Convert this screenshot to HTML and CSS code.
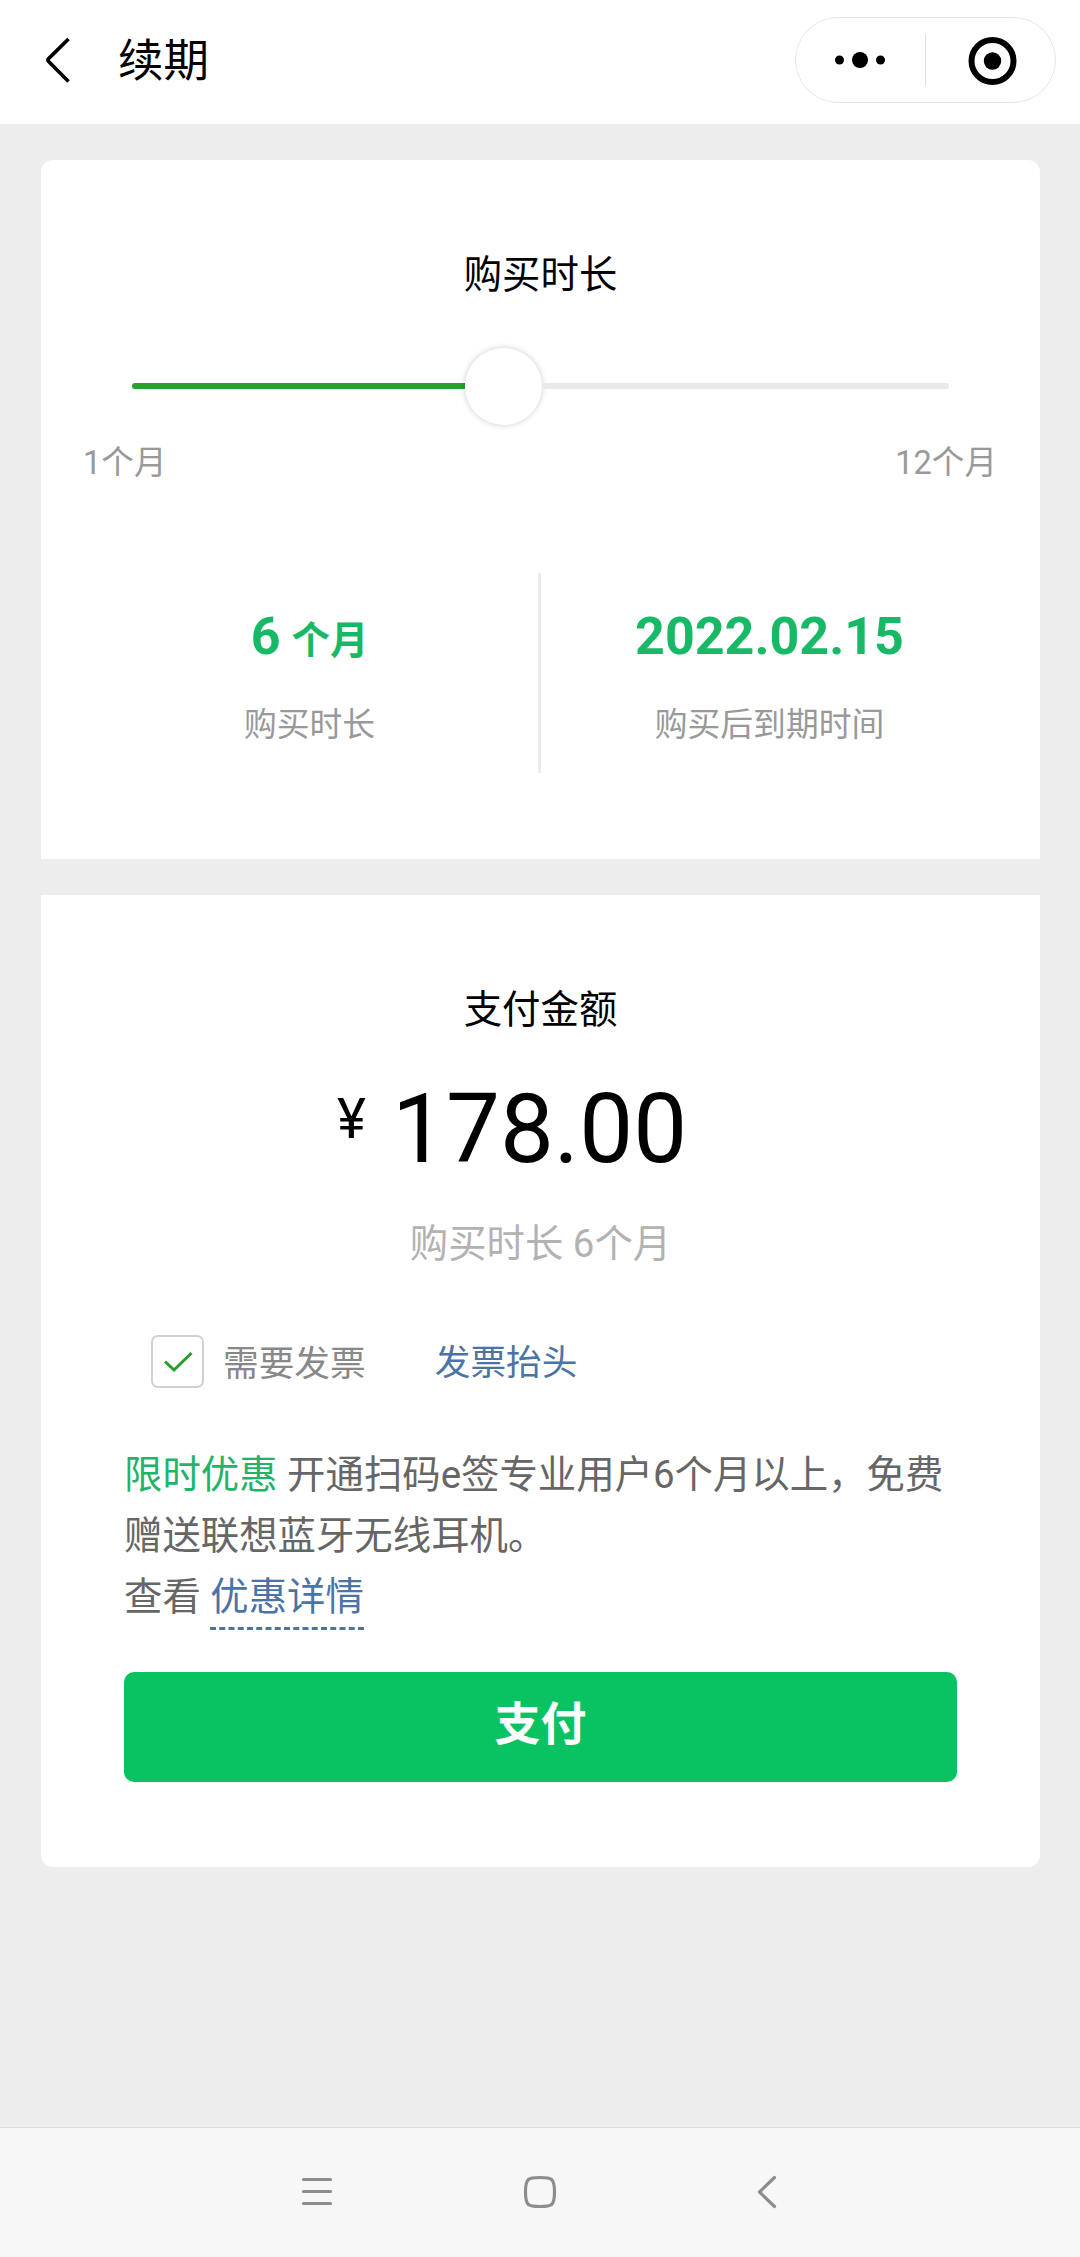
FILE: index.html
```html
<!DOCTYPE html>
<html lang="zh-CN">
<head>
<meta charset="utf-8">
<title>续期</title>
<link rel="stylesheet" href="styles.css">
</head>
<body>
<header class="topbar">
  <svg class="back" width="28" height="48" viewBox="0 0 28 48" fill="none" stroke="#000" stroke-width="3.6" stroke-linejoin="round"><path d="M24.5 3 4.6 22.6Q3.2 24 4.6 25.4L24.5 45.500"/></svg>
  <h1 class="page-title">续期</h1>
  <div class="capsule">
    <svg class="more" width="129" height="84" viewBox="0 0 129 84"><circle cx="43.500" cy="42" r="4.500"/><circle cx="64" cy="42" r="8"/><circle cx="84.500" cy="42" r="4.500"/></svg>
    <span class="capsule-line"></span>
    <svg class="close" width="129" height="84" viewBox="0 0 129 84"><circle cx="66.500" cy="43" r="21" fill="none" stroke="#000" stroke-width="6"/><circle cx="66.500" cy="43" r="8.700"/></svg>
  </div>
</header>
<main class="content">
  <section class="card card-term">
    <h2 class="card-title">购买时长</h2>
    <div class="slider"><span class="fill"></span><span class="thumb"></span><span class="rest"></span></div>
    <div class="range"><span>1个月</span><span>12个月</span></div>
    <div class="stats">
      <div class="stat"><div class="value">6 <span class="unit">个月</span></div><div class="label">购买时长</div></div>
      <span class="divider"></span>
      <div class="stat"><div class="value">2022.02.15</div><div class="label">购买后到期时间</div></div>
    </div>
  </section>
  <section class="card card-pay">
    <h2 class="card-title">支付金额</h2>
    <div class="price"><span class="currency">¥</span><span class="amount">178.00</span></div>
    <div class="summary">购买时长 6个月</div>
    <div class="invoice">
      <span class="checkbox"><svg width="49" height="49" viewBox="0 0 49 49" fill="none" stroke="#25a027" stroke-width="3"><path d="M12 24.500 21 33 38.500 16"/></svg></span>
      <span class="invoice-text">需要发票</span>
      <a class="invoice-link">发票抬头</a>
    </div>
    <p class="promo"><span class="tag">限时优惠</span> <span>开通扫码e签专业用户6个月以上，免费</span><br><span>赠送联想蓝牙无线耳机。</span><br><span>查看</span> <a class="detail">优惠详情</a></p>
    <button class="pay">支付</button>
  </section>
</main>
<nav class="navbar">
  <svg width="36" height="36" viewBox="0 0 36 36"><path d="M4.500 5.500h27M4.500 17.500h27M4.500 29.500h27"/></svg>
  <svg class="home" width="36" height="36" viewBox="0 0 36 36"><path d="M18 3.500C29.500 3.500 32.500 4 32.500 18S29.500 32.500 18 32.500 3.500 32 3.500 18 6.500 3.500 18 3.500Z"/></svg>
  <svg width="36" height="36" viewBox="0 0 36 36"><path d="M26.500 3.500 11.500 18 26.500 32.500"/></svg>
</nav>
</body>
</html>
```
FILE: styles.css
```css
* { box-sizing: border-box; }
body {
  margin: 0;
  width: 1080px;
  height: 2257px;
  display: flex;
  flex-direction: column;
  background: #ededed;
  color: #000;
  font-family: Roboto, "Noto Sans CJK SC", sans-serif;
}
h1, h2, p { margin: 0; font-weight: 400; }
svg { display: block; }

.topbar {
  flex: none;
  height: 124px;
  padding: 17px 24px 21px 44px;
  display: flex;
  align-items: center;
  background: #fff;
}
.page-title {
  margin-left: 46px;
  height: 60px;
  font-size: 45.5px;
  line-height: 64px;
}
.capsule {
  margin-left: auto;
  width: 261px;
  height: 86px;
  display: flex;
  align-items: center;
  border: 1px solid #e6e6e6;
  border-radius: 43px;
}
.capsule-line { width: 1px; height: 52px; background: #dcdcdc; }

.content {
  flex: 1;
  padding: 36px 40px 0 41px;
  display: flex;
  flex-direction: column;
  gap: 36px;
}
.card { background: #fff; }
.card-term { height: 699px; padding: 82px 40px 0; border-radius: 12px 12px 0 0; }
.card-pay { height: 972px; padding: 82px 83px 0; border-radius: 0 0 12px 12px; }
.card-title {
  height: 60px;
  font-size: 38.4px;
  line-height: 66px;
  text-align: center;
}

.slider {
  height: 80px;
  margin: 44px 10px 0 51px;
  width: 817px;
  display: flex;
  align-items: center;
}
.fill { width: 333px; height: 6px; border-radius: 3px 0 0 3px; background: #28a22d; }
.thumb {
  width: 77px;
  height: 77px;
  border-radius: 50%;
  background: #fff;
  box-shadow: 0 0 6px rgba(0, 0, 0, .2);
}
.rest { flex: 1; height: 6px; border-radius: 0 3px 3px 0; background: #e9e9e9; }
.range {
  height: 46px;
  margin: 11px 3px 0 2px;
  display: flex;
  justify-content: space-between;
  font-size: 32.6px;
  line-height: 52px;
  color: #999;
}
.stats { height: 200px; margin: 90px 2px 0 0; display: flex; }
.divider { width: 3px; background: #ebebeb; }
.stat { flex: 1; padding-top: 34px; text-align: center; }
.value {
  height: 60px;
  font-size: 52px;
  font-weight: 700;
  line-height: 60px;
  color: #18b966;
}
.unit { font-size: 38.4px; margin-left: -2px; }
.label {
  height: 46px;
  margin-top: 32px;
  font-size: 32.8px;
  line-height: 52px;
  color: #999;
}

.price {
  height: 110px;
  margin-top: 37px;
  padding-left: 213px;
  display: flex;
}
.currency { width: 55px; font-size: 55px; line-height: 90px; }
.amount { font-size: 96px; line-height: 110px; }
.summary {
  height: 60px;
  margin-top: 26px;
  font-size: 38.4px;
  line-height: 67px;
  text-align: center;
  color: #b2b2b2;
}
.invoice {
  height: 53px;
  margin: 65px 0 0 27px;
  display: flex;
  font-size: 35.7px;
  line-height: 58px;
}
.checkbox { width: 53px; height: 53px; border: 2px solid #d1d1d1; border-radius: 7px; }
.invoice-text { margin-left: 19px; color: #888; }
.invoice-link { margin: -1px 0 0 69px; color: #4a74a6; }
.promo {
  height: 184px;
  margin-top: 56px;
  font-size: 38.4px;
  line-height: 61.2px;
  white-space: nowrap;
  color: #666;
}
.tag { color: #1fb468; }
.detail { padding-bottom: 8px; border-bottom: 3px dashed #4a74a6; color: #4a74a6; }
.pay {
  display: block;
  width: 833px;
  height: 110px;
  margin-top: 44px;
  padding: 0 0 6px;
  border: 0;
  border-radius: 10px;
  background: #09c362;
  color: #fff;
  font: 700 46px/60px Roboto, "Noto Sans CJK SC", sans-serif;
}

.navbar {
  flex: none;
  height: 130px;
  padding: 46px 296px 0 299px;
  display: flex;
  justify-content: space-between;
  background: #f7f7f7;
  border-top: 1px solid #dcdcdc;
}
.navbar svg { fill: none; stroke: #8d8d8d; stroke-width: 3.2; stroke-linecap: round; stroke-linejoin: round; }
.navbar .home { margin-right: 4px; }
```
